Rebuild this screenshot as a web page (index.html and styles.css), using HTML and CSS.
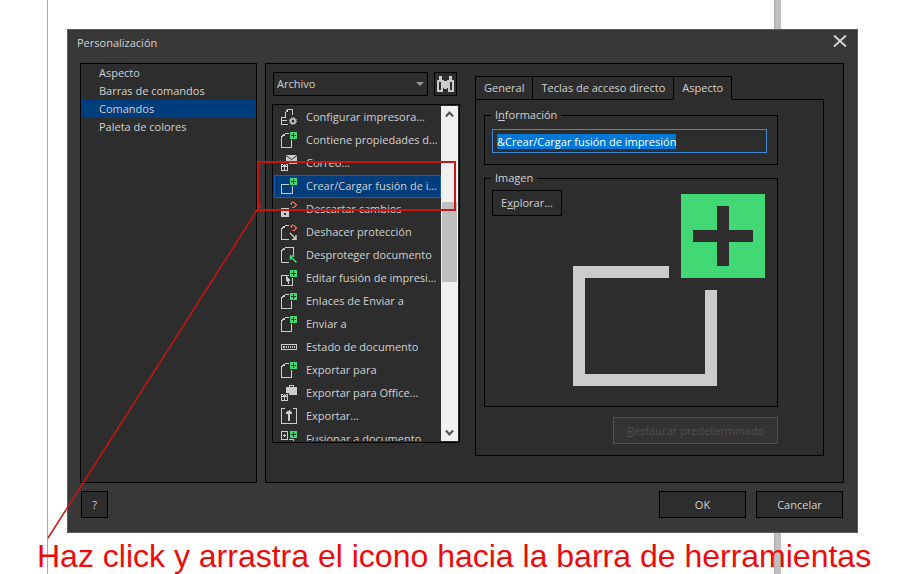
FILE: index.html
```html
<!DOCTYPE html>
<html lang="es">
<head>
    <meta charset="UTF-8">
    <meta name="viewport" content="width=device-width, initial-scale=1.0">
    <title>Personalización</title>
    <link rel="stylesheet" href="styles.css">
</head>
<body>

<svg class="sprite">
    <symbol id="plus" viewBox="0 0 16 16">
        <path fill="#42d974" d="M9 0h7v7H9zM12 1v2h-2v1h2v2h1V4h2V3h-2V1z" fill-rule="evenodd"/>
    </symbol>
    <symbol id="export-box" viewBox="0 0 16 16">
        <path fill="#ccc" d="M0 9h2v1H1v5h5v-5H5V9h2v7H0zM3 9h1v1h1v1h1v1H4v3H3v-3H1v-1h1v-1h1z"/>
    </symbol>
    <symbol id="undo" viewBox="0 0 16 16">
        <path fill="#d9655c" d="M9 2h1V1h1V0h1v1h2v1h1v1h1v2h-1v1h-1v1h-3V6h2V5h1V3h-1V2h-2v2h-1V3H9z"/>
    </symbol>
    <symbol id="icon-printer" viewBox="0 0 16 16">
        <path fill="#ccc" d="M6 0h6v6h-1V1H7v2H5v5H4V3h1V1h1zM0 8h5v1H1v2h5v1H1v3h6v1H0z"/>
        <g shape-rendering="auto" fill="none" stroke="#ccc">
            <circle cx="12" cy="12" r="2.3" stroke-width="1.6"/>
            <circle cx="12" cy="12" r="3.5" stroke-dasharray="1.4 1.35"/>
        </g>
    </symbol>
    <symbol id="icon-doc-plus" viewBox="0 0 16 16">
        <path fill="#ccc" d="M4 1h4v1H4v2H2v1H1v10h9V8h1v8H0V4h1V3h1V2h2z"/>
        <use href="#plus"/>
    </symbol>
    <symbol id="icon-mail" viewBox="0 0 16 16">
        <path fill="#ccc" d="M5 0h11v9H8V8H5z"/>
        <path shape-rendering="auto" fill="none" stroke="#2d2d2d" d="M5 0.5l5.5 4L16 0.5"/>
        <use href="#export-box"/>
    </symbol>
    <symbol id="icon-merge" viewBox="0 0 16 16">
        <path fill="#ccc" d="M0 6h8v1H1v8h10V8h1v8H0z"/>
        <use href="#plus"/>
    </symbol>
    <symbol id="icon-discard" viewBox="0 0 16 16">
        <path fill="#ccc" fill-rule="evenodd" d="M0 7h8v9H0zM2 8h4v2H2zM3 12h2v2H3z"/>
        <use href="#undo"/>
    </symbol>
    <symbol id="icon-unprotect-undo" viewBox="0 0 16 16">
        <path fill="#ccc" d="M4 1h4v1H4v2H2v1H1v10h7v1H0V4h1V3h1V2h2z"/>
        <path shape-rendering="auto" fill="none" stroke="#ccc" stroke-width="1.4" d="M9 9l5.5 5.5M15 11v4.3h-4"/>
        <use href="#undo"/>
    </symbol>
    <symbol id="icon-unprotect" viewBox="0 0 16 16">
        <path fill="#ccc" d="M4 0h9v8h-1V1H4v2H2v1H1v11h7v1H0V3h1V2h1V1h2z"/>
        <path shape-rendering="auto" fill="none" stroke="#42d974" stroke-width="1.5" d="M9.5 9.5l6 6M9.5 13V9h4"/>
    </symbol>
    <symbol id="icon-merge-edit" viewBox="0 0 16 16">
        <path fill="#ccc" d="M0 5h8v1H1v9h10V8h1v8H0zM5 6h1v1h1v1h1v1h1v2H8v3H7v-2H6v-1H5z"/>
        <use href="#plus"/>
    </symbol>
    <symbol id="icon-status" viewBox="0 0 16 16">
        <path fill="#ccc" fill-rule="evenodd" d="M0 5h16v6H0zM1 6v4h14V6z"/>
        <path fill="#ccc" d="M2 7h2v2H2zM5 7h1v2H5zM7 7h1v2H7zM9 7h1v2H9zM11 7h1v2h-1zM13 7h1v2h-1z"/>
    </symbol>
    <symbol id="icon-office" viewBox="0 0 16 16">
        <path fill="#ccc" d="M8 0h5v2h3v8H8V8H5V2h3zM9 1v1h3V1z" fill-rule="evenodd"/>
        <use href="#export-box"/>
    </symbol>
    <symbol id="icon-export" viewBox="0 0 16 16">
        <path fill="#ccc" d="M0 0h4v1H1v14h14V1h-3V0h4v16H0zM8 2h1v1h1v1h1v2H9v7H7V6H5V4h1V3h2z"/>
    </symbol>
    <symbol id="icon-join" viewBox="0 0 16 16">
        <path fill="#ccc" fill-rule="evenodd" d="M0 0h7v9H0zM1 1v7h5V1z"/>
        <path fill="#ccc" d="M3 3h1v1h1v1H4v1H3V5H2V4h1zM8 8h5v2h-1V9H8z"/>
        <use href="#plus"/>
    </symbol>
</svg>

<div class="page">
    <div class="dialog" role="dialog" aria-labelledby="dialogTitle">
        <div class="title-bar">
            <span id="dialogTitle">Personalización</span>
            <button class="close" aria-label="Cerrar">
                <svg width="14" height="12" viewBox="0 0 14 12"><path d="M1 0.500L13 11.500M13 0.500L1 11.500" stroke="#d0d0d0" stroke-width="2"/></svg>
            </button>
        </div>

        <div class="dialog-body">
            <div class="categories">
                <button>Aspecto</button>
                <button>Barras de comandos</button>
                <button class="selected">Comandos</button>
                <button>Paleta de colores</button>
            </div>

            <div class="settings">
                <div class="commands">
                    <div class="filter">
                        <div class="select-box">
                            <select aria-label="Menú">
                                <option>Archivo</option>
                            </select>
                        </div>
                        <button class="find" aria-label="Buscar">
                            <svg width="17" height="16" viewBox="0 0 17 16" shape-rendering="crispEdges"><path fill="#ccc" fill-rule="evenodd" d="M2 0h3v4h2v1h3V4h2V0h3v4h2v12h-6v-4h-1v1H7v-1H6v4H0V4h2zM2 6v8h2V6zM13 6v8h2V6z"/></svg>
                        </button>
                    </div>
                    <div class="command-list">
                        <div class="command-items" id="commandItems"></div>
                        <div class="scrollbar">
                            <svg width="9" height="16" viewBox="0 0 9 16"><path d="M1 10.500L4.500 6.500L8 10.500" fill="none" stroke="#505050" stroke-width="2"/></svg>
                            <div class="thumb"></div>
                            <svg width="9" height="16" viewBox="0 0 9 16"><path d="M1 5.500L4.500 9.500L8 5.500" fill="none" stroke="#505050" stroke-width="2"/></svg>
                        </div>
                    </div>
                </div>

                <div class="details">
                    <div class="tabs" role="tablist">
                        <button role="tab">General</button>
                        <button role="tab">Teclas de acceso directo</button>
                        <button role="tab" class="active" aria-selected="true">Aspecto</button>
                    </div>
                    <div class="tab-panel">
                        <fieldset>
                            <legend><label for="caption">I<u>n</u>formación</label></legend>
                            <input type="text" id="caption" value="&amp;Crear/Cargar fusión de impresión">
                        </fieldset>
                        <fieldset class="image-group">
                            <legend>Imagen</legend>
                            <button class="browse">E<u>x</u>plorar...</button>
                            <svg class="preview" viewBox="0 0 16 16"><use href="#icon-merge"/></svg>
                        </fieldset>
                        <button class="restore" disabled><u>R</u>estaurar predeterminado</button>
                    </div>
                </div>
            </div>
        </div>

        <div class="dialog-footer">
            <button class="help">?</button>
            <div class="actions">
                <button>OK</button>
                <button>Cancelar</button>
            </div>
        </div>
    </div>

    <p class="note">Haz click y arrastra el icono hacia la barra de herramientas</p>

    <svg class="marker" width="480" height="560">
        <rect x="258" y="162" width="197" height="48" fill="none" stroke="#cc1414" stroke-width="2"/>
        <path d="M261 204L48 538" stroke="#cc1414" stroke-width="1.500"/>
    </svg>
</div>

<script>
    const commands = [
        ['printer', 'Configurar impresora...'],
        ['doc-plus', 'Contiene propiedades del documento'],
        ['mail', 'Correo...'],
        ['merge', 'Crear/Cargar fusión de impresión'],
        ['discard', 'Descartar cambios'],
        ['unprotect-undo', 'Deshacer protección'],
        ['unprotect', 'Desproteger documento'],
        ['merge-edit', 'Editar fusión de impresión'],
        ['doc-plus', 'Enlaces de Enviar a'],
        ['doc-plus', 'Enviar a'],
        ['status', 'Estado de documento'],
        ['doc-plus', 'Exportar para'],
        ['office', 'Exportar para Office...'],
        ['export', 'Exportar...'],
        ['join', 'Fusionar a documento']
    ];
    const commandItems = document.getElementById('commandItems');

    commands.forEach(([icon, label], index) => {
        const button = document.createElement('button');
        button.innerHTML = `<svg width="16" height="16"><use href="#icon-${icon}"/></svg><span>${label}</span>`;
        if (index === 3) {
            button.classList.add('selected');
        }
        commandItems.appendChild(button);
    });

    const caption = document.getElementById('caption');
    caption.focus();
    caption.select();
</script>

</body>
</html>
```

FILE: styles.css
```css
* {
    box-sizing: border-box;
}
body {
    margin: 0;
    background: #fff;
    color: #d0d0d0;
    font: 11px/16px "Open Sans", sans-serif;
}
button, input, select {
    font: inherit;
    color: inherit;
    background: #2d2d2d;
    border: 1px solid #000;
    border-radius: 0;
    padding: 0;
}
.sprite {
    display: none;
}
.page {
    position: relative;
    min-height: 100vh;
    padding: 29px 0 0 37px;
    overflow: hidden;
    background:
        linear-gradient(#a6a6a6, #a6a6a6) 47px 0 / 1px 100% no-repeat,
        linear-gradient(90deg, #aaa 1px, #bfbfbf 1px) right 130px top 0 / 7px 100% no-repeat;
}
.dialog {
    margin: 0 53px 0 30px;
    padding: 0 13px 14px 12px;
    background: #383838;
    border: 1px solid #5a5d5b;
}
.title-bar {
    display: flex;
    justify-content: space-between;
    align-items: flex-start;
    height: 33px;
    padding: 5px 0 0;
}
.title-bar span {
    margin-left: -3px;
}
.close {
    display: flex;
    background: none;
    border: none;
    margin-right: -3px;
}
.dialog-body {
    display: flex;
    gap: 8px;
}
.categories {
    flex: 0 0 177px;
    background: #2d2d2d;
    border: 1px solid #000;
}
.categories button {
    display: block;
    width: 100%;
    height: 18px;
    padding-left: 18px;
    border: none;
    text-align: left;
}
.categories .selected {
    background: #003d7c;
}
.settings {
    flex: 1;
    min-width: 0;
    display: flex;
    align-items: flex-start;
    gap: 15px;
    padding: 8px 19px 26px 6px;
    background: #2d2d2d;
    border: 1px solid #000;
}
.commands {
    flex: 0 0 188px;
    min-width: 0;
}
.filter {
    display: flex;
    gap: 6px;
    margin-bottom: 8px;
    padding: 0 3px 0 1px;
}
.select-box {
    flex: 1;
    position: relative;
}
.select-box::after {
    content: "";
    position: absolute;
    right: 4px;
    top: 10px;
    border: 4px solid transparent;
    border-top-color: #999;
    border-bottom: none;
}
.select-box select {
    appearance: none;
    width: 100%;
    height: 24px;
    padding-left: 3px;
}
.find {
    display: flex;
    align-items: center;
    justify-content: center;
    width: 23px;
    height: 24px;
}
.command-list {
    display: flex;
    height: 339px;
    padding: 1px;
    border: 1px solid #000;
}
.command-items {
    flex: 1;
    min-width: 0;
    overflow: hidden;
}
.command-items button {
    display: flex;
    align-items: center;
    gap: 9px;
    width: 100%;
    height: 23px;
    padding: 0 0 1px 6px;
    border: 1px solid transparent;
    text-align: left;
}
.command-items svg {
    flex: none;
    shape-rendering: crispEdges;
}
.command-items span {
    overflow: hidden;
    text-overflow: ellipsis;
    white-space: nowrap;
}
.command-items .selected {
    background: #003d7c;
    border-color: #1c5fae;
}
.scrollbar {
    display: flex;
    flex-direction: column;
    justify-content: space-between;
    align-items: center;
    flex: 0 0 17px;
    background: #f0f0f0;
}
.thumb {
    width: 15px;
    height: 80px;
    margin-bottom: 63px;
    background: #bfbfbf;
}
.details {
    flex: 1;
    min-width: 0;
    padding-top: 4px;
}
.tabs {
    display: flex;
}
.tabs button {
    height: 24px;
    padding: 0 8px;
    margin-bottom: -1px;
    white-space: nowrap;
}
.tabs button + button {
    margin-left: -1px;
}
.tabs .active {
    position: relative;
    border-bottom-color: #2d2d2d;
}
.tab-panel {
    padding: 7px 45px 11px 8px;
    border: 1px solid #000;
}
fieldset {
    min-width: 0;
    margin: 0 0 5px;
    padding: 6px 10px 11px 7px;
    border: 1px solid #000;
}
legend {
    margin-left: -1px;
    padding: 0 4px;
}
fieldset input {
    display: block;
    width: 100%;
    height: 24px;
    padding: 0 4px;
    border-color: #3f8ad8;
    outline: none;
}
fieldset input::selection {
    background: #0078d7;
    color: #fff;
}
.image-group {
    display: flex;
    justify-content: space-between;
    align-items: flex-start;
    margin-bottom: 10px;
    padding: 4px 12px 20px 7px;
}
.browse {
    width: 70px;
    height: 26px;
}
.preview {
    width: 192px;
    height: 192px;
    margin-top: 4px;
}
.restore {
    display: block;
    width: 165px;
    height: 27px;
    margin-left: auto;
    background: #333;
    border-color: #505050;
    color: #505050;
}
.dialog-footer {
    display: flex;
    justify-content: space-between;
    padding: 8px 1px 0;
}
.dialog-footer button {
    height: 27px;
}
.help {
    width: 27px;
}
.actions {
    display: flex;
    gap: 10px;
}
.actions button {
    width: 87px;
}
.note {
    margin: 4px 0 0;
    color: #ee0a0a;
    font: 32px/39px "Liberation Sans", Arial, sans-serif;
    white-space: nowrap;
}
.marker {
    position: absolute;
    left: 0;
    top: 0;
    pointer-events: none;
}
```
